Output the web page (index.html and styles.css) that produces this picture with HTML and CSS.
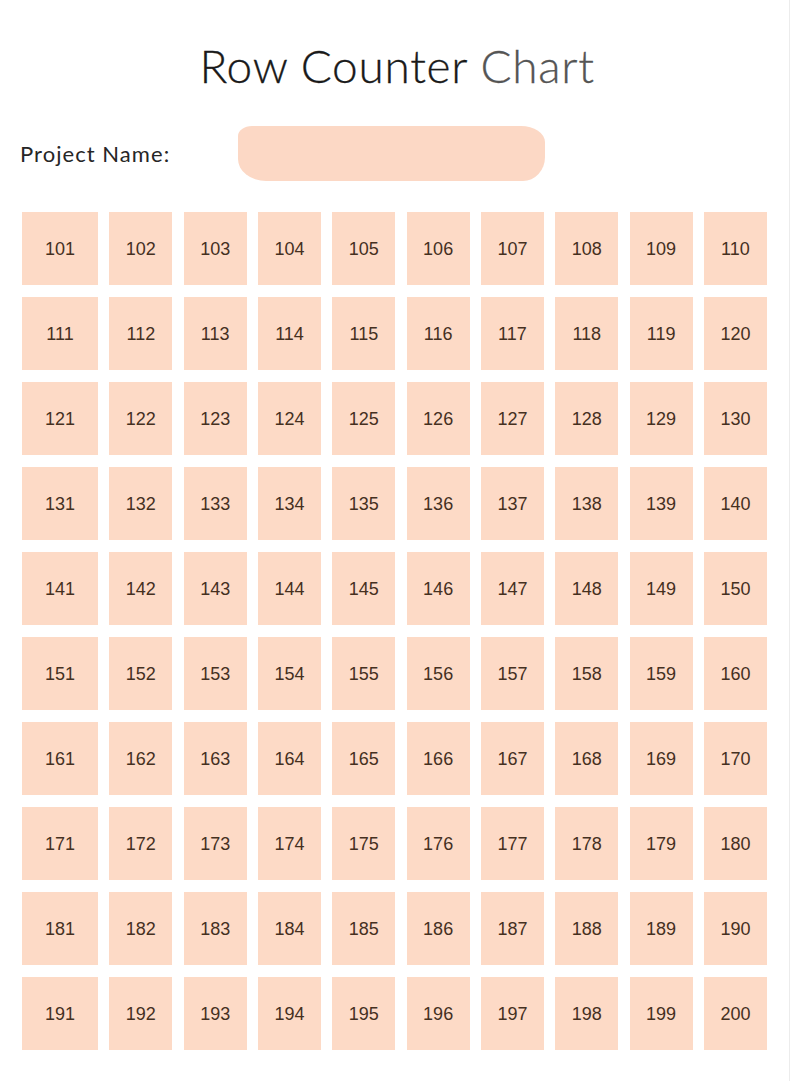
FILE: index.html
```html
<!DOCTYPE html>
<html lang="en">
<head>
<meta charset="utf-8">
<title>Row Counter Chart</title>
<link rel="stylesheet" href="styles.css">
</head>
<body>
<div class="page">
  <h1 class="title">Row Counter <span class="title-light">Chart</span></h1>
  <div class="project">
    <span class="project-label">Project Name:</span>
    <span class="project-field"></span>
  </div>
  <div class="grid">
    <div class="cell">101</div><div class="cell">102</div><div class="cell">103</div><div class="cell">104</div><div class="cell">105</div><div class="cell">106</div><div class="cell">107</div><div class="cell">108</div><div class="cell">109</div><div class="cell">110</div>
    <div class="cell">111</div><div class="cell">112</div><div class="cell">113</div><div class="cell">114</div><div class="cell">115</div><div class="cell">116</div><div class="cell">117</div><div class="cell">118</div><div class="cell">119</div><div class="cell">120</div>
    <div class="cell">121</div><div class="cell">122</div><div class="cell">123</div><div class="cell">124</div><div class="cell">125</div><div class="cell">126</div><div class="cell">127</div><div class="cell">128</div><div class="cell">129</div><div class="cell">130</div>
    <div class="cell">131</div><div class="cell">132</div><div class="cell">133</div><div class="cell">134</div><div class="cell">135</div><div class="cell">136</div><div class="cell">137</div><div class="cell">138</div><div class="cell">139</div><div class="cell">140</div>
    <div class="cell">141</div><div class="cell">142</div><div class="cell">143</div><div class="cell">144</div><div class="cell">145</div><div class="cell">146</div><div class="cell">147</div><div class="cell">148</div><div class="cell">149</div><div class="cell">150</div>
    <div class="cell">151</div><div class="cell">152</div><div class="cell">153</div><div class="cell">154</div><div class="cell">155</div><div class="cell">156</div><div class="cell">157</div><div class="cell">158</div><div class="cell">159</div><div class="cell">160</div>
    <div class="cell">161</div><div class="cell">162</div><div class="cell">163</div><div class="cell">164</div><div class="cell">165</div><div class="cell">166</div><div class="cell">167</div><div class="cell">168</div><div class="cell">169</div><div class="cell">170</div>
    <div class="cell">171</div><div class="cell">172</div><div class="cell">173</div><div class="cell">174</div><div class="cell">175</div><div class="cell">176</div><div class="cell">177</div><div class="cell">178</div><div class="cell">179</div><div class="cell">180</div>
    <div class="cell">181</div><div class="cell">182</div><div class="cell">183</div><div class="cell">184</div><div class="cell">185</div><div class="cell">186</div><div class="cell">187</div><div class="cell">188</div><div class="cell">189</div><div class="cell">190</div>
    <div class="cell">191</div><div class="cell">192</div><div class="cell">193</div><div class="cell">194</div><div class="cell">195</div><div class="cell">196</div><div class="cell">197</div><div class="cell">198</div><div class="cell">199</div><div class="cell">200</div>
  </div>
</div>
</body>
</html>
```
FILE: styles.css
```css
html, body {
  margin: 0;
  padding: 0;
  background: #ffffff;
}

.page {
  width: 790px;
  height: 1081px;
  box-sizing: border-box;
  border-right: 1px solid #ececec;
  padding: 36px 0 0 22px;
}

.title {
  margin: 0 0 0 -22px;
  width: 794px;
  text-align: center;
  font-family: "Lato", "Liberation Sans", sans-serif;
  font-weight: 300;
  font-size: 46px;
  line-height: 60px;
  color: #1a1a1a;
  letter-spacing: 0.7px;
  -webkit-text-stroke: 0.3px #1a1a1a;
}

.title-light {
  color: #555555;
  -webkit-text-stroke: 0.3px #555555;
}

.project {
  display: flex;
  align-items: center;
  margin-top: 29px;
  margin-left: -2px;
  height: 56px;
}

.project-label {
  font-family: "Lato", "Liberation Sans", sans-serif;
  font-size: 22px;
  letter-spacing: 1.05px;
  color: #262626;
  width: 218px;
}

.project-field {
  display: block;
  width: 307px;
  height: 55px;
  background: #fcd8c5;
  border-radius: 14px 24px 22px 28px / 10px 16px 24px 22px;
}

.grid {
  margin-top: 31px;
  display: grid;
  grid-template-columns: 76px repeat(9, 63px);
  grid-auto-rows: 73px;
  column-gap: 11.33px;
  row-gap: 12px;
}

.cell {
  background: #fddac6;
  display: flex;
  align-items: center;
  justify-content: center;
  padding-top: 2px;
  font-family: "Liberation Sans", "Arial", sans-serif;
  font-size: 18px;
  color: #45301f;
}
```
